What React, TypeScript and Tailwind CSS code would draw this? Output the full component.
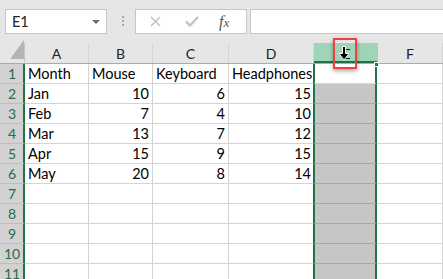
import React from 'react';

const cols = ['A', 'B', 'C', 'D', 'E', 'F'];
const widths = ['w-[64px]', 'w-[64px]', 'w-[76px]', 'w-[85px]', 'w-[64px]', 'flex-1'];

const data: (string | number)[][] = [
  ['Month', 'Mouse', 'Keyboard', 'Headphones'],
  ['Jan', 10, 6, 15],
  ['Feb', 7, 4, 10],
  ['Mar', 13, 7, 12],
  ['Apr', 15, 9, 15],
  ['May', 20, 8, 14],
  [], [], [], [], [],
];

const font = { fontFamily: 'Lato, "Open Sans", sans-serif' };

const FormulaBar: React.FC = () => (
  <div className="h-[43px] bg-[#e6e6e6] flex items-start pt-[9px] pl-[5px] overflow-hidden">
    <div className="w-[102px] h-[25px] bg-white border border-[#c6c6c6] flex items-center pl-[6px] pr-[6px]">
      <span className="text-[14.5px] text-[#222] flex-1">E1</span>
      <svg width="8" height="4" viewBox="0 0 8 4"><path d="M0 0h8L4 4z" fill="#6a6a6a" /></svg>
    </div>
    <div className="ml-[15px] mt-[7px] flex flex-col gap-[2px]">
      <div className="w-[2px] h-[2px] bg-[#a8a8a8]" />
      <div className="w-[2px] h-[2px] bg-[#a8a8a8]" />
      <div className="w-[2px] h-[2px] bg-[#a8a8a8]" />
    </div>
    <div className="ml-[11px] w-[112px] h-[25px] bg-white border border-[#c6c6c6] flex items-center">
      <svg className="ml-[14px]" width="11" height="11" viewBox="0 0 11 11">
        <path d="M1 1l9 9M10 1l-9 9" stroke="#bdbdbd" strokeWidth="1.4" />
      </svg>
      <svg className="ml-[24px]" width="14" height="11" viewBox="0 0 14 11">
        <path d="M1 5.5l4 4 8-8.5" stroke="#c2c2c2" strokeWidth="2.4" fill="none" />
      </svg>
      <span
        className="ml-[20px] text-[16px] italic text-[#555] leading-none"
        style={{ fontFamily: '"Liberation Serif", serif' }}
      >
        f<span className="text-[13px]">x</span>
      </span>
    </div>
    <div className="ml-[3px] flex-1 -mr-[4px] h-[25px] bg-white border border-[#c6c6c6]" />
  </div>
);

const HeaderRow: React.FC = () => (
  <div className="flex h-[21px] bg-[#e6e6e6] border-b border-[#ababab]">
    <div className="w-[25px] border-r border-[#c6c6c6] relative">
      <svg className="absolute left-[10px] top-[-3px]" width="14" height="20" viewBox="0 0 14 20">
        <path d="M14 0v19H0z" fill="#b4b4b4" />
      </svg>
    </div>
    {cols.map((c, i) => (
      <div
        key={c}
        className={`${widths[i]} flex items-center justify-center text-[14px] text-[#222] border-r ${
          c === 'E' ? 'bg-[#9fd5b7] border-[#9fd5b7] shadow-[inset_0_-2px_0_#217346]' : 'border-[#d4d4d4]'
        }`}
      >
        {c === 'E' ? <span className="pl-[2px]">E</span> : c}
      </div>
    ))}
  </div>
);

const Row: React.FC<{ n: number; cells: (string | number)[] }> = ({ n, cells }) => (
  <div className="flex h-[20px]">
    <div className="w-[25px] bg-[#d2d2d2] border-b border-[#bdbdbd] border-r-2 border-r-[#217346] flex items-center justify-center pl-[1px] text-[14px] text-[#2a6a4a]">
      {n}
    </div>
    {cols.map((c, i) => {
      const v = cells[i];
      const num = typeof v === 'number';
      if (c === 'E')
        return (
          <div
            key={c}
            className={`${widths[i]} border-x-2 border-x-[#217346] relative -ml-[1px] ${
              n === 1 ? 'bg-white border-b border-b-[#d4d4d4]' : 'bg-[#c6c6c6] border-b border-b-[#a8a8a8]'
            }`}
          >
            {n === 1 && <div className="absolute right-[-4px] top-[-2px] w-[5px] h-[5px] bg-[#217346] border border-white" />}
          </div>
        );
      return (
        <div
          key={c}
          className={`${widths[i]} border-b border-r border-[#d4d4d4] flex items-center px-[3px] text-[14.5px] text-black whitespace-nowrap ${
            num ? 'justify-end' : 'justify-start'
          } ${c === 'D' ? 'border-r-0' : ''}`}
        >
          {v}
        </div>
      );
    })}
  </div>
);

const App: React.FC = () => (
  <div className="w-[443px] h-[279px] overflow-hidden bg-white relative" style={font}>
    <FormulaBar />
    <HeaderRow />
    {data.map((r, i) => (
      <Row key={i} n={i + 1} cells={r} />
    ))}
    <div className="absolute left-[333px] top-[38px] w-[24px] h-[31px] border-2 border-[#f04141] shadow-[0_2px_4px_rgba(0,0,0,0.35)]" />
    <svg className="absolute left-[338px] top-[46px]" width="12" height="15" viewBox="0 0 12 15">
      <path d="M4.5 0.5h3v7H11L6 14 1 7.5h3.5z" fill="#000" stroke="#fff" strokeWidth="1" />
    </svg>
  </div>
);

export default App;
